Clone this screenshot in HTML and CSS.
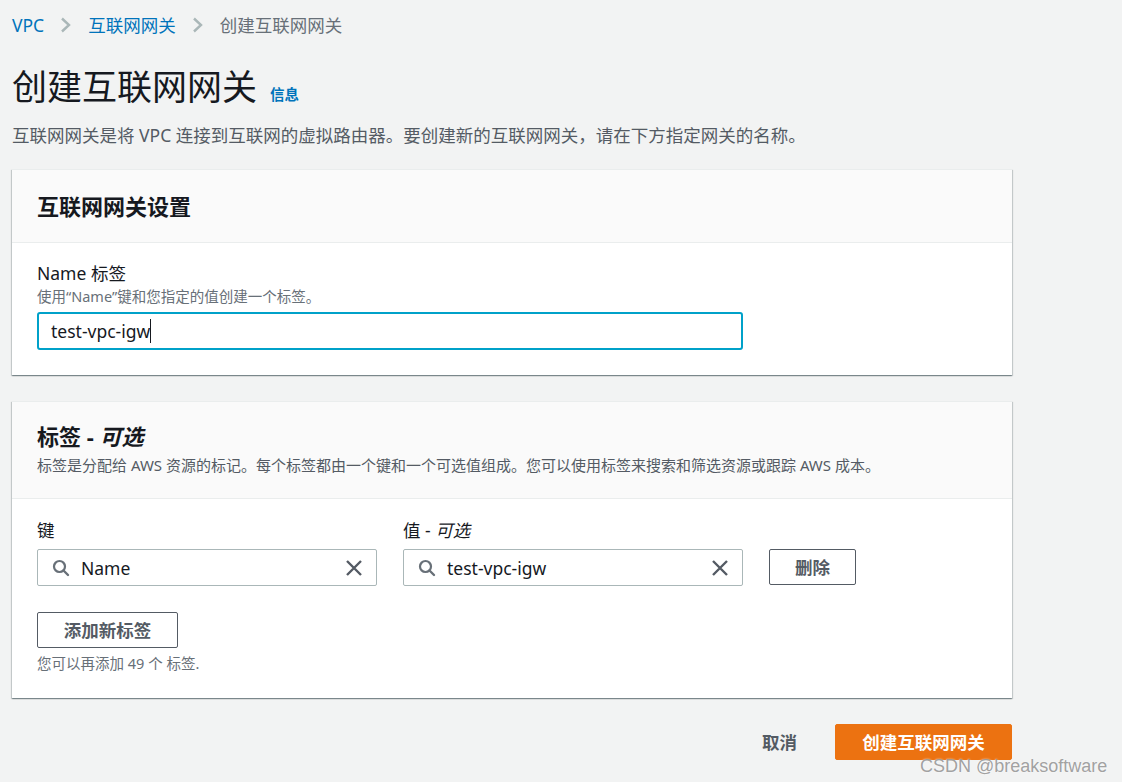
FILE: index.html
```html
<!DOCTYPE html>
<html lang="zh-CN">
<head>
<meta charset="utf-8">
<title>创建互联网网关</title>
<link rel="stylesheet" href="styles.css">
</head>
<body>
<div class="page">
  <nav class="crumbs">
    <a class="crumb-link">VPC</a>
    <span class="sep"><svg width="12" height="16" viewBox="0 0 12 16"><path d="M2 1.5l7 6.5-7 6.5" fill="none" stroke="#aab7b8" stroke-width="2.4"/></svg></span>
    <a class="crumb-link">互联网网关</a>
    <span class="sep"><svg width="12" height="16" viewBox="0 0 12 16"><path d="M2 1.5l7 6.5-7 6.5" fill="none" stroke="#aab7b8" stroke-width="2.4"/></svg></span>
    <span class="crumb-current">创建互联网网关</span>
  </nav>

  <header class="page-head">
    <h1 class="title">创建互联网网关</h1>
    <a class="info">信息</a>
  </header>
  <p class="lead">互联网网关是将 VPC 连接到互联网的虚拟路由器。要创建新的互联网网关，请在下方指定网关的名称。</p>

  <section class="panel">
    <div class="panel-head panel-head-single">
      <h2 class="panel-title">互联网网关设置</h2>
    </div>
    <div class="panel-body">
      <div class="field-label">Name 标签</div>
      <div class="field-help">使用“Name”键和您指定的值创建一个标签。</div>
      <div class="text-input focused"><span>test-vpc-igw</span><span class="caret"></span></div>
    </div>
  </section>

  <section class="panel">
    <div class="panel-head">
      <h2 class="panel-title">标签 - <em>可选</em></h2>
      <div class="panel-desc">标签是分配给 AWS 资源的标记。每个标签都由一个键和一个可选值组成。您可以使用标签来搜索和筛选资源或跟踪 AWS 成本。</div>
    </div>
    <div class="panel-body tags-body">
      <div class="tag-row">
        <div class="tag-col">
          <div class="field-label">键</div>
          <div class="search-input">
            <svg class="search-icon" width="18" height="18" viewBox="0 0 18 18"><circle cx="7.5" cy="7.5" r="5.5" fill="none" stroke="#687078" stroke-width="2.2"/><path d="M11.5 11.5l4.5 4.5" stroke="#687078" stroke-width="2.4" stroke-linecap="round"/></svg>
            <span class="search-text">Name</span>
            <svg class="clear-icon" width="18" height="18" viewBox="0 0 18 18"><path d="M2 2l14 14M16 2L2 16" stroke="#545b64" stroke-width="2.4"/></svg>
          </div>
        </div>
        <div class="tag-col">
          <div class="field-label">值 - <em>可选</em></div>
          <div class="search-input">
            <svg class="search-icon" width="18" height="18" viewBox="0 0 18 18"><circle cx="7.5" cy="7.5" r="5.5" fill="none" stroke="#687078" stroke-width="2.2"/><path d="M11.5 11.5l4.5 4.5" stroke="#687078" stroke-width="2.4" stroke-linecap="round"/></svg>
            <span class="search-text">test-vpc-igw</span>
            <svg class="clear-icon" width="18" height="18" viewBox="0 0 18 18"><path d="M2 2l14 14M16 2L2 16" stroke="#545b64" stroke-width="2.4"/></svg>
          </div>
        </div>
        <button class="btn btn-normal btn-remove">删除</button>
      </div>
      <button class="btn btn-normal btn-add">添加新标签</button>
      <div class="hint">您可以再添加 49 个 标签.</div>
    </div>
  </section>

  <footer class="actions">
    <button class="btn-link">取消</button>
    <button class="btn btn-primary">创建互联网网关</button>
  </footer>
</div>
<div class="watermark">CSDN @breaksoftware</div>
</body>
</html>
```

FILE: styles.css
```css
* { box-sizing: border-box; }

html, body {
  margin: 0;
  padding: 0;
  background: #f2f3f3;
}

body {
  font-family: "Noto Sans", "Noto Sans CJK SC", sans-serif;
  color: #16191f;
  font-size: 17.5px;
  width: 1122px;
  height: 782px;
  overflow: hidden;
  position: relative;
}

.page {
  padding: 0 12px;
  width: 1024px;
}

.crumbs {
  display: flex;
  align-items: center;
  height: 50px;
  line-height: 24px;
}

.crumb-link { color: #0073bb; }
.crumb-current { color: #687078; }

.sep {
  display: flex;
  align-items: center;
  margin: 0 16px;
}

.page-head {
  display: flex;
  align-items: center;
  margin-top: 14px;
}

.title {
  margin: 0;
  font-size: 35px;
  font-weight: 400;
  line-height: 46px;
}

.info {
  color: #0073bb;
  font-size: 14.5px;
  font-weight: 700;
  margin-left: 13px;
  margin-top: 14px;
  line-height: 20px;
}

.lead {
  margin: 12px 0 0;
  color: #545b64;
  line-height: 27px;
}

.panel {
  width: 1000px;
  background: #fff;
  border-top: 1px solid #eaeded;
  box-shadow: 0 1px 1px 0 rgba(0, 28, 36, .3), 1px 1px 1px 0 rgba(0, 28, 36, .15), -1px 1px 1px 0 rgba(0, 28, 36, .15);
  margin-top: 20px;
}

.panel + .panel { margin-top: 26px; }

.panel-head {
  background: #fafafa;
  border-bottom: 1px solid #eaeded;
  padding: 19px 25px 23px;
}

.panel-head-single {
  height: 73px;
  padding: 0 25px;
  display: flex;
  align-items: center;
}

.panel-title {
  margin: 0;
  font-size: 22px;
  font-weight: 700;
  line-height: 30px;
}

.panel-title em, .field-label em { font-style: italic; }

.panel-desc {
  margin-top: 4px;
  font-size: 15px;
  line-height: 20px;
  color: #545b64;
}

.panel-body {
  padding: 18px 25px 25px;
}

.field-label {
  line-height: 24px;
}

.field-help {
  font-size: 14.5px;
  line-height: 20px;
  color: #687078;
  margin-top: 1px;
}

.text-input {
  margin-top: 6px;
  width: 706px;
  height: 38px;
  border: 2px solid #00a1c9;
  border-radius: 3px;
  padding: 0 12px;
  display: flex;
  align-items: center;
}

.caret {
  display: inline-block;
  width: 1px;
  height: 24px;
  background: #16191f;
}

.tags-body { padding-top: 19px; }

.tag-row {
  display: flex;
  align-items: flex-end;
  gap: 26px;
}

.tag-col { width: 340px; flex: none; }

.search-input {
  margin-top: 7px;
  height: 37px;
  border: 1px solid #aab7b8;
  border-radius: 2px;
  display: flex;
  align-items: center;
  padding: 0 13px 0 14px;
}

.search-icon { flex: none; }

.search-text {
  flex: 1;
  margin-left: 11px;
}

.clear-icon { flex: none; }

.btn {
  font-family: inherit;
  font-size: 17.5px;
  font-weight: 700;
  height: 36px;
  border-radius: 2px;
  padding: 0 20px;
  cursor: pointer;
  line-height: 24px;
}

.btn-normal {
  background: #fff;
  border: 1px solid #545b64;
  color: #545b64;
}

.btn-remove {
  width: 87px;
  padding: 0;
  margin-bottom: 1px;
}

.btn-add {
  display: block;
  width: 141px;
  padding: 0;
  margin-top: 26px;
}

.hint {
  margin-top: 5px;
  font-size: 14.5px;
  line-height: 20px;
  color: #687078;
}

.actions {
  width: 1000px;
  margin-top: 26px;
  display: flex;
  justify-content: flex-end;
  align-items: center;
  gap: 38px;
}

.btn-link {
  font-family: inherit;
  font-size: 17.5px;
  font-weight: 700;
  color: #545b64;
  background: none;
  border: none;
  padding: 0;
  line-height: 24px;
}

.btn-primary {
  width: 177px;
  background: #ec7211;
  border: 1px solid #ec7211;
  color: #fff;
  padding: 0;
}

.watermark {
  position: absolute;
  left: 920px;
  top: 755px;
  font-family: "Liberation Sans", Arial, sans-serif;
  font-size: 18px;
  line-height: 22px;
  color: rgba(150, 150, 150, 0.9);
  text-shadow: 0 0 2px rgba(255, 255, 255, 0.8);
}
```
